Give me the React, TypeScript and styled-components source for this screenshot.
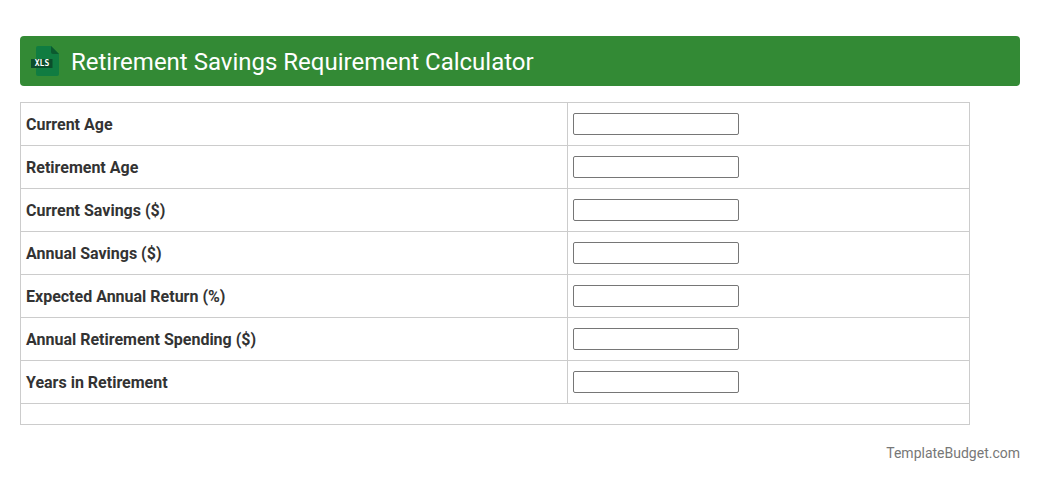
import styled, { createGlobalStyle } from "styled-components";

const Global = createGlobalStyle`
  body {
    margin: 0;
    background: #fff;
    font-family: Roboto, "Liberation Sans", sans-serif;
  }
`;

const Page = styled.div`
  width: 1040px;
  height: 482px;
  padding: 36px 20px 0;
  box-sizing: border-box;
`;

const Header = styled.div`
  height: 50px;
  background: #338a35;
  border-radius: 4px;
  display: flex;
  align-items: center;
  padding-left: 10px;
  gap: 11px;
`;

const Title = styled.h1`
  margin: 0;
  padding-top: 2px;
  color: #fff;
  font-size: 24px;
  font-weight: 400;
`;

const Table = styled.table`
  width: 950px;
  margin-top: 16px;
  border-collapse: collapse;
  table-layout: fixed;
`;

const Cell = styled.td`
  border: 1px solid #ccc;
  padding: 0 5px;
  height: 43px;
  box-sizing: border-box;
`;

const Label = styled(Cell)`
  width: 547px;
  padding-top: 1px;
  font-size: 16px;
  font-weight: 700;
  color: #333;
`;

const EmptyCell = styled.td`
  border: 1px solid #ccc;
  padding: 0;
  height: 21px;
  box-sizing: border-box;
`;

const Field = styled.input`
  display: block;
  width: 166px;
  height: 22px;
  box-sizing: border-box;
  border: 1px solid #767676;
  border-radius: 2px;
  background: #fff;
  padding: 1px 2px;
`;

const Footer = styled.div`
  margin-top: 20px;
  text-align: right;
  font-size: 14px;
  color: #777;
`;

const rows = [
  "Current Age",
  "Retirement Age",
  "Current Savings ($)",
  "Annual Savings ($)",
  "Expected Annual Return (%)",
  "Annual Retirement Spending ($)",
  "Years in Retirement",
];

function XlsIcon() {
  return (
    <svg width="30" height="30" viewBox="0 0 30 30">
      <path d="M8 0h13l8 8v20a2 2 0 0 1-2 2H8a2 2 0 0 1-2-2V2a2 2 0 0 1 2-2z" fill="#107c41" />
      <path d="M21 0l8 8h-6a2 2 0 0 1-2-2z" fill="#0b5a2f" />
      <rect x="1" y="13" width="21.5" height="9" fill="#0b4d2b" />
      <text x="12" y="20.2" fontSize="8" fontWeight="700" fill="#fff" textAnchor="middle" fontFamily="DejaVu Sans Mono, monospace">XLS</text>
    </svg>
  );
}

function App() {
  return (
    <Page>
      <Global />
      <Header>
        <XlsIcon />
        <Title>Retirement Savings Requirement Calculator</Title>
      </Header>
      <Table>
        <tbody>
          {rows.map((r) => (
            <tr key={r}>
              <Label>{r}</Label>
              <Cell>
                <Field type="text" />
              </Cell>
            </tr>
          ))}
          <tr>
            <EmptyCell colSpan={2} />
          </tr>
        </tbody>
      </Table>
      <Footer>TemplateBudget.com</Footer>
    </Page>
  );
}

export default App;
